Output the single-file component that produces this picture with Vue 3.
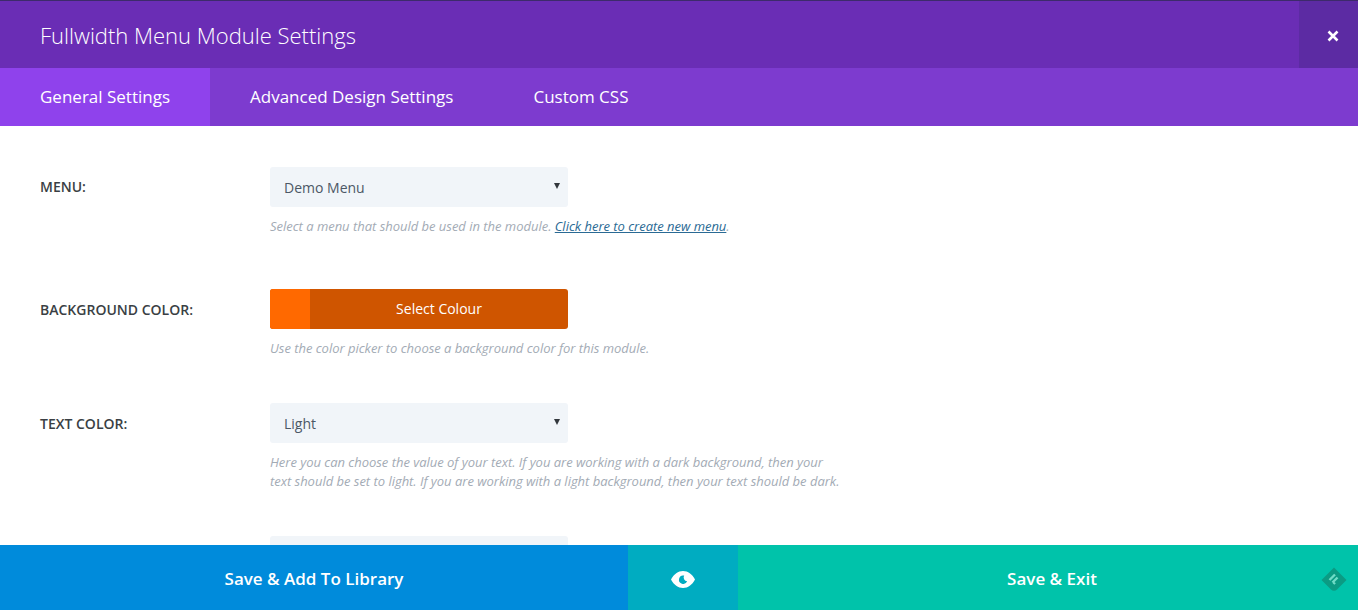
<script setup>
const tabs = [
  { label: "General Settings", active: true },
  { label: "Advanced Design Settings", active: false },
  { label: "Custom CSS", active: false }
];
</script>

<template>
  <div class="modal">
    <header class="modal-header">
      <h1 class="modal-title">Fullwidth Menu Module Settings</h1>
      <button class="close-btn" aria-label="Close">
        <svg width="12" height="12" viewBox="0 0 12 12">
          <path d="M1.5 1.5 10.5 10.5M10.5 1.5 1.5 10.5" stroke="#fff" stroke-width="2.6" fill="none" />
        </svg>
      </button>
    </header>

    <nav class="tabs">
      <a v-for="tab in tabs" :key="tab.label" class="tab" :class="{ active: tab.active }">{{ tab.label }}</a>
    </nav>

    <main class="content">
      <section class="field field-menu">
        <label class="field-label">MENU:</label>
        <div class="field-body">
          <div class="select-wrap">
            <select class="select"><option>Demo Menu</option></select>
          </div>
          <p class="hint">Select a menu that should be used in the module. <a class="hint-link">Click here to create new menu</a>.</p>
        </div>
      </section>

      <section class="field field-bg">
        <label class="field-label">BACKGROUND COLOR:</label>
        <div class="field-body">
          <button class="color-btn">
            <span class="swatch"></span>
            <span class="color-text">Select Colour</span>
          </button>
          <p class="hint">Use the color picker to choose a background color for this module.</p>
        </div>
      </section>

      <section class="field field-text">
        <label class="field-label">TEXT COLOR:</label>
        <div class="field-body">
          <div class="select-wrap">
            <select class="select"><option>Light</option></select>
          </div>
          <p class="hint">Here you can choose the value of your text. If you are working with a dark background, then your<br />text should be set to light. If you are working with a light background, then your text should be dark.</p>
        </div>
      </section>

      <section class="field field-last">
        <div class="field-body">
          <div class="select-wrap"></div>
        </div>
      </section>
    </main>

    <footer class="footer">
      <button class="foot-btn foot-library">Save &amp; Add To Library</button>
      <button class="foot-btn foot-preview" aria-label="Preview">
        <svg width="24" height="17" viewBox="0 0 24 17">
          <path d="M0 8.5C3 3 7 0 12 0s9 3 12 8.5C21 14 17 17 12 17S3 14 0 8.5Z" fill="#fff" />
          <path d="M13.2 4.6a4.2 4.2 0 1 0 2.9 5.6 3.7 3.7 0 0 1-2.9-5.6Z" fill="#00acc1" />
        </svg>
      </button>
      <button class="foot-btn foot-save">Save &amp; Exit</button>
      <svg class="feedly" width="28" height="28" viewBox="0 0 28 28">
        <path d="M14 1.5 26.5 14 17 23.5a4 4 0 0 1-6 0L1.5 14Z" fill="#0b9b83" />
        <path d="M15 8.5 9.5 14M17.5 11.5 12.5 16.5M15 16.5 13.5 18" stroke="#6fdcc6" stroke-width="2.4" fill="none" />
      </svg>
    </footer>
  </div>
</template>

<style scoped>
.modal {
  width: 1358px;
  height: 610px;
  display: flex;
  flex-direction: column;
  overflow: hidden;
  position: relative;
  background: #fff;
  font-family: "Open Sans", "Liberation Sans", sans-serif;
}

.modal-header {
  flex: 0 0 68px;
  box-sizing: border-box;
  display: flex;
  align-items: stretch;
  justify-content: space-between;
  background: #6a2db5;
  border-top: 1px solid #3d2a6b;
}

.modal-title {
  margin: 0;
  padding: 2px 0 0 40px;
  font-size: 22px;
  font-weight: 300;
  line-height: 65px;
  color: #fff;
}

.close-btn {
  width: 59px;
  border: 0;
  padding: 2px 0 0 9px;
  background: #5c2ba3;
  display: flex;
  align-items: center;
  justify-content: center;
}

.tabs {
  flex: 0 0 58px;
  display: flex;
  background: #7d3bcf;
}

.tab {
  padding: 0 40px;
  font-size: 17px;
  font-weight: 400;
  line-height: 58px;
  color: #fff;
}

.tab.active {
  background: #8f42ec;
}

.content {
  flex: 1;
  min-height: 0;
  overflow: hidden;
  padding: 41px 40px 0;
}

.field {
  display: flex;
}

.field-bg {
  margin-top: 53px;
}

.field-text {
  margin-top: 45px;
}

.field-last {
  margin-top: 45px;
  padding-left: 230px;
}

.field-label {
  width: 230px;
  flex: none;
  font-size: 14px;
  font-weight: 600;
  line-height: 42px;
  color: #3a3f44;
}

.field-menu .field-label {
  line-height: 40px;
}

.select-wrap {
  position: relative;
  width: 298px;
  height: 40px;
  border-radius: 3px;
  background: #f1f5f9;
}

.select-wrap:has(.select)::after {
  content: "";
  position: absolute;
  top: 16px;
  right: 8px;
  border-left: 3px solid transparent;
  border-right: 3px solid transparent;
  border-top: 6px solid #32373c;
}

.select {
  appearance: none;
  width: 100%;
  height: 40px;
  border: 0;
  padding: 0 14px;
  background: transparent;
  font-family: inherit;
  font-size: 14px;
  font-weight: 400;
  color: #4c5866;
}

.color-btn {
  display: flex;
  width: 298px;
  height: 40px;
  border: 0;
  padding: 0;
  border-radius: 3px;
  overflow: hidden;
  background: #cf5500;
  font-family: inherit;
}

.swatch {
  flex: 0 0 40px;
  background: #ff6900;
}

.color-text {
  flex: 1;
  font-size: 14px;
  font-weight: 400;
  line-height: 40px;
  text-align: center;
  color: #fff;
}

.hint {
  margin: 10px 0 0;
  font-size: 13px;
  font-style: italic;
  line-height: 19px;
  letter-spacing: -0.02px;
  color: #a3abb5;
}

.hint-link {
  color: #2a6a94;
  text-decoration: underline;
}

.footer {
  flex: 0 0 65px;
  display: flex;
  position: relative;
}

.foot-btn {
  border: 0;
  padding: 2px 0 0;
  font-family: inherit;
  font-size: 17px;
  font-weight: 600;
  color: #fff;
  display: flex;
  align-items: center;
  justify-content: center;
}

.foot-library {
  flex: 0 0 628px;
  background: #008bdb;
}

.foot-preview {
  flex: 0 0 110px;
  padding-top: 3px;
  background: #00acc1;
}

.foot-save {
  flex: 1;
  padding-left: 8px;
  background: #00c3aa;
}

.feedly {
  position: absolute;
  right: 10px;
  top: 21px;
}
</style>
